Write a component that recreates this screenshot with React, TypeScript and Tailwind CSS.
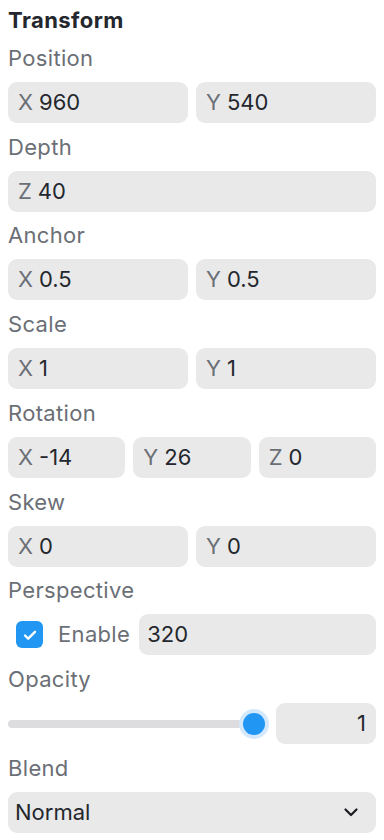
import React from 'react';

const font = { fontFamily: 'Inter, "Noto Sans", sans-serif' };

function Field({ axis, value, className = '' }: { axis: string; value: string; className?: string }) {
    return (
        <div className={`flex h-[41px] items-center gap-[6px] rounded-[9px] bg-[#e9e9ea] px-[10px] text-[22px] ${className}`}>
            <span className="text-[#6b6f76]">{axis}</span>
            <span className="text-[#24272d]">{value}</span>
        </div>
    );
}

function Label({ children }: { children: React.ReactNode }) {
    return <div className="h-[28px] text-[22px] leading-[28px] tracking-[0.015em] text-[#6b6f76]">{children}</div>;
}

function Section({ label, children }: { label: string; children: React.ReactNode }) {
    return (
        <div className="flex flex-col gap-[10px]">
            <Label>{label}</Label>
            {children}
        </div>
    );
}

export default function App() {
    return (
        <div className="min-h-[840px] w-[384px] bg-white" style={font}>
            <div className="flex flex-col gap-[9.75px] px-[8px] pt-[6px]">
                <div className="h-[28px] text-[22px] font-bold leading-[28px] tracking-[0.02em] text-[#24272d]">Transform</div>

                <Section label="Position">
                    <div className="grid grid-cols-2 gap-[8px]">
                        <Field axis="X" value="960" />
                        <Field axis="Y" value="540" />
                    </div>
                </Section>

                <Section label="Depth">
                    <Field axis="Z" value="40" />
                </Section>

                <Section label="Anchor">
                    <div className="grid grid-cols-2 gap-[8px]">
                        <Field axis="X" value="0.5" />
                        <Field axis="Y" value="0.5" />
                    </div>
                </Section>

                <Section label="Scale">
                    <div className="grid grid-cols-2 gap-[8px]">
                        <Field axis="X" value="1" />
                        <Field axis="Y" value="1" />
                    </div>
                </Section>

                <Section label="Rotation">
                    <div className="grid grid-cols-3 gap-[8px]">
                        <Field axis="X" value="-14" />
                        <Field axis="Y" value="26" />
                        <Field axis="Z" value="0" />
                    </div>
                </Section>

                <Section label="Skew">
                    <div className="grid grid-cols-2 gap-[8px]">
                        <Field axis="X" value="0" />
                        <Field axis="Y" value="0" />
                    </div>
                </Section>

                <Section label="Perspective">
                    <div className="flex h-[41px] items-center">
                        {/* checkbox */}
                        <div className="ml-[8px] flex h-[27px] w-[27px] items-center justify-center rounded-[6px] bg-[#2196f3]">
                            <svg width="16" height="16" viewBox="0 0 16 16" fill="none">
                                <path d="M3 8.5l3.2 3.2L13 4.8" stroke="white" strokeWidth="2.4" strokeLinecap="round" strokeLinejoin="round" />
                            </svg>
                        </div>
                        <span className="ml-[15px] mr-[9px] text-[22px] tracking-[0.015em] text-[#6b6f76]">Enable</span>
                        <div className="flex h-[41px] flex-1 items-center rounded-[9px] bg-[#e9e9ea] px-[8px] text-[22px] text-[#24272d]">
                            320
                        </div>
                    </div>
                </Section>

                <Section label="Opacity">
                    <div className="flex h-[41px] items-center gap-[10px]">
                        <div className="relative flex h-[41px] flex-1 items-center">
                            <div className="h-[8px] w-full rounded-full bg-[#dddde0]" />
                            <div className="absolute right-[-3px] top-1/2 h-[30px] w-[30px] -translate-y-1/2 rounded-full bg-[#d4e8fc] p-[4px]">
                                <div className="h-full w-full rounded-full bg-[#2196f3]" />
                            </div>
                        </div>
                        <div className="flex h-[41px] w-[100px] items-center justify-end rounded-[9px] bg-[#e9e9ea] px-[10px] text-[22px] text-[#24272d]">
                            1
                        </div>
                    </div>
                </Section>

                <Section label="Blend">
                    <div className="flex h-[41px] items-center justify-between rounded-[9px] bg-[#e9e9ea] pl-[7px] pr-[16px] text-[22px] text-[#24272d]">
                        <span>Normal</span>
                        <svg width="18" height="18" viewBox="0 0 18 18" fill="none">
                            <path d="M3.5 6.5L9 12l5.5-5.5" stroke="#1a1c20" strokeWidth="2.2" strokeLinecap="round" strokeLinejoin="round" />
                        </svg>
                    </div>
                </Section>
            </div>
        </div>
    );
}
